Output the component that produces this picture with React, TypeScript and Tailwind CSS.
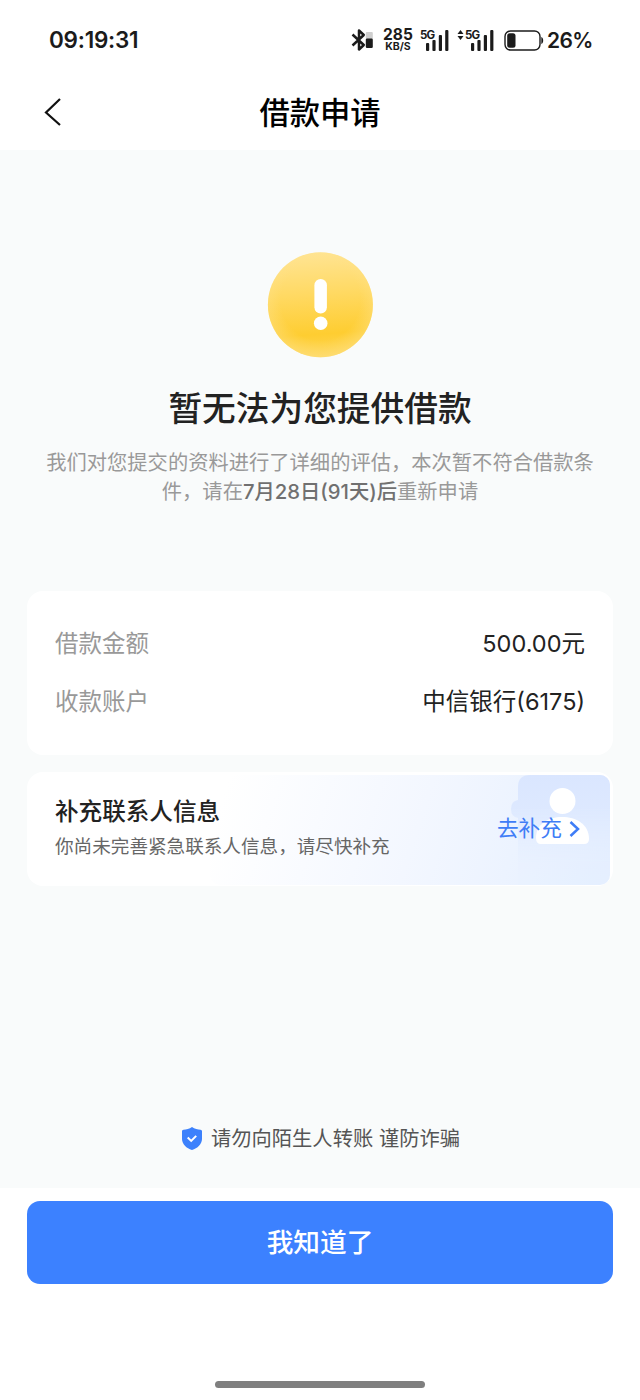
function BluetoothIcon() {
  return (
    <svg className="h-[26px] w-6 shrink-0" viewBox="0 0 24 26" fill="none">
      <path d="M1.500 7.500 12.800 18 8 22.500V3.500L12.800 8 1.500 18.500" stroke="#1b1b1b" strokeWidth="2.500" strokeLinejoin="round" />
      <rect x="14.800" y="5" width="7" height="7" rx="1" fill="#cfcfcf" />
      <rect x="14.800" y="11.500" width="7" height="9.500" rx="1.2" fill="#1b1b1b" />
    </svg>
  );
}

function SignalBars() {
  return (
    <svg className="h-[22px] w-[23px]" viewBox="0 0 23 22" fill="#1b1b1b">
      <rect x="0" y="13" width="3.2" height="8" rx="1" />
      <rect x="6.4" y="10" width="3.2" height="11" rx="1" />
      <rect x="12.8" y="5" width="3.2" height="16" rx="1" />
      <rect x="19.2" y="0" width="3.2" height="21" rx="1" />
    </svg>
  );
}

function StatusBar() {
  return (
    <div className="flex h-20 items-center pl-[49px] pr-[47px] text-[#1b1b1b]">
      <span className="w-[120px] pt-px text-[22.5px] leading-none font-semibold tracking-[-0.25px]">09:19:31</span>
      <div className="ml-auto flex items-center">
        <BluetoothIcon />
        <div className="ml-[8px] flex w-[30px] flex-col items-center font-bold">
          <span className="text-[15.5px] leading-[13px]">285</span>
          <span className="text-[10.500px] leading-[11px]">KB/S</span>
        </div>
        <div className="relative ml-[13px] mt-px">
          <SignalBars />
          <span className="absolute -left-[6px] top-0 text-[11.500px] leading-[10px] font-bold tracking-[-0.8px]">5G</span>
        </div>
        <div className="relative ml-[22px] mt-px">
          <SignalBars />
          <span className="absolute -left-[6px] top-0 text-[11.500px] leading-[10px] font-bold tracking-[-0.8px]">5G</span>
          <svg className="absolute -left-[14px] top-0 h-2.5 w-[7px]" viewBox="0 0 7 10" fill="#1b1b1b">
            <path d="M3.5 0 6.5 4h-6zM3.5 10l3-4h-6z" />
          </svg>
        </div>
        <svg className="ml-[10px] mt-0.5 h-[22px] w-10 shrink-0" viewBox="0 0 40 22" fill="none">
          <rect x="1" y="1" width="35" height="19" rx="5.5" stroke="#1b1b1b" strokeWidth="1.4" />
          <rect x="3.2" y="3.2" width="8.3" height="14.6" rx="2.5" fill="#1b1b1b" />
          <path d="M37.3 7c2.5.6 2.5 6.400 0 7z" fill="#1b1b1b" />
        </svg>
        <span className="ml-[3px] w-[46px] whitespace-nowrap pt-px text-[21px] leading-none font-semibold tracking-[-0.6px]">26%</span>
      </div>
    </div>
  );
}

function WarningIcon() {
  return (
    <svg className="size-[106px]" viewBox="0 0 106 106">
      <defs>
        <linearGradient id="coin" x1="0.45" y1="0" x2="0.52" y2="1">
          <stop offset="0" stopColor="#ffe493" />
          <stop offset="0.4" stopColor="#ffd962" />
          <stop offset="0.78" stopColor="#fecd31" />
          <stop offset="1" stopColor="#fed657" />
        </linearGradient>
        <radialGradient id="rim" cx="0.5" cy="0.46" r="0.54">
          <stop offset="0.7" stopColor="#ffe28a" stopOpacity="0" />
          <stop offset="1" stopColor="#ffe28a" stopOpacity="0.5" />
        </radialGradient>
      </defs>
      <circle cx="53.400" cy="52.700" r="52.500" fill="url(#coin)" />
      <circle cx="53.400" cy="52.700" r="52.500" fill="url(#rim)" />
      <rect x="47.400" y="27" width="12.500" height="34.500" rx="6.2" fill="#fff" />
      <circle cx="53.700" cy="71.200" r="6.800" fill="#fff" />
    </svg>
  );
}

function ContactArt() {
  return (
    <svg className="absolute right-[3px] top-[3px] h-[110px] w-[400px]" viewBox="0 0 400 110">
      <defs>
        <linearGradient id="sheet" gradientUnits="userSpaceOnUse" x1="20" y1="0" x2="390" y2="120">
          <stop offset="0" stopColor="#fff" />
          <stop offset="0.5" stopColor="#f3f7ff" />
          <stop offset="1" stopColor="#e5efff" />
        </linearGradient>
        <linearGradient id="book" x1="0" y1="0" x2="0" y2="1">
          <stop offset="0" stopColor="#dae6ff" />
          <stop offset="0.5" stopColor="#dfeaff" />
          <stop offset="1" stopColor="#e6f0ff" />
        </linearGradient>
        <linearGradient id="bookFade" x1="0" y1="0" x2="0" y2="1">
          <stop offset="0.3" stopColor="#fff" />
          <stop offset="0.8" stopColor="#fff" stopOpacity="0.15" />
        </linearGradient>
        <mask id="bookMask">
          <rect x="295" width="105" height="110" fill="url(#bookFade)" />
        </mask>
        <clipPath id="sheetClip"><rect width="400" height="110" rx="10" /></clipPath>
      </defs>
      <g clipPath="url(#sheetClip)">
        <rect width="400" height="110" fill="url(#sheet)" />
        <path d="M308 12Q308 0 320 0H400V110H308V43q-7-1-7-9t7-9z" fill="url(#book)" mask="url(#bookMask)" />
      </g>
      <circle cx="352.500" cy="26" r="13" fill="#fff" />
      <path d="M326 63c0-14 12-21 26-21s27 7 27 22q0 5-5 5h-43q-5 0-5-6z" fill="#fff" />
    </svg>
  );
}

function DetailRow({ label, value }: { label: string; value: string }) {
  return (
    <div className="flex h-[58px] items-center justify-between text-[23.5px]">
      <span className="text-[#999]">{label}</span>
      <span className="text-[#222]">{value}</span>
    </div>
  );
}

export default function App() {
  return (
    <div className="flex h-[1400px] w-[640px] flex-col overflow-hidden bg-white font-[Inter,'Noto_Sans_CJK_SC',sans-serif]">
      <StatusBar />
      <header className="grid h-[70px] grid-cols-[1fr_auto_1fr] items-center pb-[6px]">
        <svg className="ml-11 h-7 w-[18px]" viewBox="0 0 18 28" fill="none">
          <path d="M16 1 2 14.500 16 27" stroke="#111" strokeWidth="2.2" />
        </svg>
        <h1 className="pt-0.5 text-[30.300px] leading-none font-medium text-black">借款申请</h1>
      </header>

      <main className="flex h-[1038px] flex-col bg-[#f9fbfb] px-[27px]">
        <section className="flex flex-col items-center pt-[102px]">
          <WarningIcon />
          <h2 className="mt-[27px] text-[33.700px] leading-[48px] font-medium text-[#222]">暂无法为您提供借款</h2>
          <p className="mt-[15px] whitespace-nowrap text-center text-[20.300px] leading-[29px] text-[#999]">
            我们对您提交的资料进行了详细的评估，本次暂不符合借款条
            <br />
            件，请在<span className="font-medium text-[#707070]">7月28日(91天)后</span>重新申请
          </p>
        </section>

        <section className="mt-[85px] h-[164px] rounded-[16px] bg-white px-7 pt-[24px]">
          <DetailRow label="借款金额" value="500.00元" />
          <DetailRow label="收款账户" value="中信银行(6175)" />
        </section>

        <section className="relative mt-[17px] flex h-[114px] items-center justify-between rounded-[16px] bg-white pl-7 pr-[33px]">
          <ContactArt />
          <div className="relative flex flex-col pb-0.5">
            <h3 className="text-[23.600px] leading-[36px] font-medium text-[#222]">补充联系人信息</h3>
            <p className="text-[18.600px] leading-[32px] text-[#666]">你尚未完善紧急联系人信息，请尽快补充</p>
          </div>
          <a className="relative flex items-center gap-[7px] text-[21.700px] leading-none text-[#3f7df6]">
            去补充
            <svg className="h-4 w-[11px]" viewBox="0 0 11 16" fill="none">
              <path d="m1.500 1 7.500 7-7.500 7" stroke="#3f7df6" strokeWidth="2.500" />
            </svg>
          </a>
        </section>

        <div className="mt-auto flex h-[99px] items-center justify-center gap-[9px] pl-0.5 text-[20.300px] text-[#555]">
          <svg className="h-[23px] w-5" viewBox="0 0 20 23" fill="none">
            <path d="M10 0c2.500 1.700 6 2.600 8.500 2.800.9.100 1.500.7 1.500 1.500V12c0 5-4.500 9.500-10 11C4.500 21.500 0 17 0 12V4.300c0-.8.6-1.400 1.500-1.500C4 2.600 7.500 1.700 10 0z" fill="#3d81fc" />
            <path d="m5.700 10.500 3.500 3.400 5-5" stroke="#fff" strokeWidth="2" />
          </svg>
          <span className="pt-0.5">请勿向陌生人转账 谨防诈骗</span>
        </div>
      </main>

      <footer className="flex flex-1 flex-col items-center px-[27px] pt-[13px]">
        <button className="h-[83px] w-full rounded-[13px] bg-[#3c81ff] text-[26.700px] font-medium text-white">我知道了</button>
        <div className="mb-[12px] mt-auto h-[7px] w-[210px] rounded-full bg-[#7f7f7f]" />
      </footer>
    </div>
  );
}
